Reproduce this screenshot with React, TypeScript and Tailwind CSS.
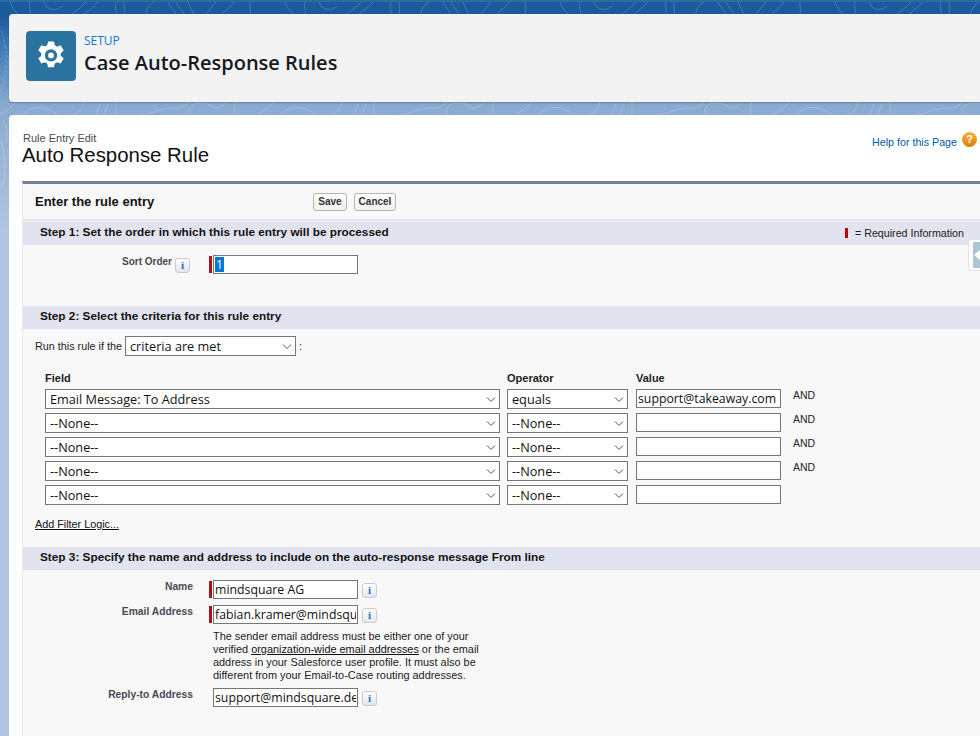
import React from "react";

function Info({ className = "" }: { className?: string }) {
  return (
    <span className={"flex h-[15px] w-[15px] shrink-0 items-center justify-center rounded-[3px] border border-[#c9ccd2] bg-gradient-to-b from-[#ffffff] to-[#e4e6ea] text-[11px] font-bold leading-none text-[#1b6fc2] [font-family:'Liberation_Serif',serif] " + className}>
      i
    </span>
  );
}

function StepBar({ text, children }: { text: string; children?: React.ReactNode }) {
  return (
    <div className="flex h-[23px] items-center justify-between bg-[#e1e4ef] pb-[1px] pl-[17px] text-[11.8px] font-bold text-[#111]">
      <span>{text}</span>
      {children}
    </div>
  );
}

function Sel({ value, className }: { value: string; className: string }) {
  return (
    <div className={"relative h-[20px] " + className}>
      <select
        defaultValue={value}
        className="block h-full w-full appearance-none rounded-none border border-[#767676] bg-white pl-[4px] text-[12.7px] text-[#111] [font-family:'Open_Sans',sans-serif]"
      >
        <option>{value}</option>
      </select>
      <svg className="pointer-events-none absolute right-[4px] top-[7px]" width="10" height="8" viewBox="0 0 10 8" fill="none" stroke="#555" strokeWidth="1">
        <path d="M1 1.500l4 4 4-4" />
      </svg>
    </div>
  );
}

function Txt({ value = "", className = "" }: { value?: string; className?: string }) {
  return (
    <input
      readOnly
      value={value}
      className={"h-[19px] w-[145px] rounded-none border border-[#767676] bg-white px-[1px] text-[12.3px] text-[#111] outline-none [font-family:'Open_Sans',sans-serif] " + className}
    />
  );
}

function FieldRow({ label, required, children, className = "" }: { label: string; required?: boolean; children: React.ReactNode; className?: string }) {
  return (
    <div className={"flex items-start " + className}>
      <div className="w-[170px] text-right text-[10.3px] font-bold leading-[13px] text-[#4a4a56]">{label}</div>
      <div className={"ml-[16px] mt-[1px] h-[17px] w-[3px] " + (required ? "bg-[#b00f1e]" : "")} />
      <div className="ml-[1px]">{children}</div>
    </div>
  );
}

const rows = [
  { f: "Email Message: To Address", o: "equals", v: "support@takeaway.com", and: true },
  { f: "--None--", o: "--None--", v: "", and: true },
  { f: "--None--", o: "--None--", v: "", and: true },
  { f: "--None--", o: "--None--", v: "", and: true },
  { f: "--None--", o: "--None--", v: "", and: false },
];

export default function App() {
  return (
    <div className="relative h-[736px] w-[980px] overflow-hidden bg-[linear-gradient(#1a5b9e_0px,#1a5b9e_16px,#4f86bd_60px,#8aa9d0_105px,#b0c4df_230px,#b0c4df_736px)] pl-[9px] pt-[14px] [font-family:'Liberation_Sans',Arial,sans-serif]">
      <div className="absolute left-0 top-0 h-[2px] w-[980px] bg-[#2a6d9e]" />
      <svg className="absolute left-0 top-0 h-[240px] w-[980px]" width="980" height="240" fill="none" stroke="#ffffff" strokeOpacity="0.18" strokeWidth="1">
        <defs>
          <pattern id="ct" x="0" y="2" width="275" height="12" patternUnits="userSpaceOnUse">
            <path d="M10 0c2 6 6 10 8 12M30 0c-2 5 2 9 0 12M44 0c2 8 12 10 18 4M72 12c6-4 10-8 14-12M84 12c6-4 10-8 14-12M116 0c-2 5 1 9 0 12M124 0c0 5 1 9 0 12M146 12c0-5 4-10 8-12M168 0c3 5 6 9 8 12M176 0c3 5 6 9 8 12M188 0c2 5 4 9 6 12M206 12c4-4 6-8 10-12M222 12c4-4 10-8 12-12M250 0c0 5 1 9 0 12" />
          </pattern>
          <pattern id="cb" x="0" y="102" width="258" height="13" patternUnits="userSpaceOnUse">
            <path d="M0 12c8-4 12-8 16-12M22 13c6-8 22-12 36 0M72 13c8-2 10-6 12-13M100 2l-4 10M108 2l-4 10M116 0v13M140 13c12 0 14-6 34-7 8 0 12-2 14-6M190 13c-4-6 2-12 8-12s10 0 14 4c6 2 10 0 14-4M236 13c-2-4-2-8 0-13" />
          </pattern>
        </defs>
        <rect x="0" y="2" width="980" height="12" fill="url(#ct)" stroke="none" />
        <rect x="0" y="102" width="980" height="13" fill="url(#cb)" stroke="none" />
        <path d="M1 30c6 20 7 40-1 62M6 46c4 14 2 26-2 38" strokeDasharray="3 2" />
        <path d="M0 140c5 10 7 30 2 46M3 120c4 6 5 12 3 22" />
      </svg>

      {/* Header card */}
      <div className="relative flex h-[88px] items-center rounded-l-[4px] bg-[#f3f3f3] pb-[4px] pl-[17px] shadow-[0_1px_2px_rgba(0,0,0,0.25)]">
        <div className="flex h-[50px] w-[50px] items-center justify-center rounded-[4px] bg-[#2a739e]">
          <svg width="32" height="32" viewBox="0 0 28 28" fill="#fff">
            <path fillRule="evenodd" d="M11.400 1.600h5.200l.7 3.400c.7.3 1.300.6 1.900 1.100l3.300-1.100 2.600 4.500-2.600 2.300c.1.700.1 1.500 0 2.200l2.600 2.300-2.600 4.500-3.300-1.100c-.6.5-1.200.8-1.900 1.100l-.7 3.400h-5.200l-.7-3.400c-.7-.3-1.300-.6-1.900-1.100l-3.300 1.100-2.600-4.500 2.600-2.300c-.1-.7-.1-1.500 0-2.200L2.900 9.300 5.500 4.800 8.800 5.900c.6-.5 1.200-.8 1.900-1.100zM14 8.400a5.400 5.400 0 1 0 0 10.800 5.400 5.400 0 0 0 0-10.800zm0 2.900a2.500 2.500 0 1 1 0 5 2.500 2.500 0 0 1 0-5z" transform="translate(0 -0.300)" />
          </svg>
        </div>
        <div className="ml-[8px] -mt-[3px]">
          <div className="text-[12px] leading-[16px] text-[#0b7ad9] [font-family:'Open_Sans',sans-serif]">SETUP</div>
          <div className="mt-[1px] text-[20px] font-semibold leading-[26px] text-[#16191f] [font-family:'Open_Sans',sans-serif]">Case Auto-Response Rules</div>
        </div>
      </div>

      {/* Body card */}
      <div className="relative mt-[13px] h-[640px] rounded-tl-[4px] bg-white pl-[13px]">
        <div className="flex items-start justify-between pt-[17px]">
          <div>
            <div className="pl-[1px] text-[11px] leading-[12px] text-[#4a4a56]">Rule Entry Edit</div>
            <div className="-mt-[1px] text-[20.4px] leading-[24px] text-[#111]">Auto Response Rule</div>
          </div>
          <div className="flex items-center pr-[3px]">
            <span className="mt-[2px] text-[10.7px] text-[#015ba7]">Help for this Page</span>
            <span className="ml-[5px] -mt-[4px] flex h-[15px] w-[15px] items-center justify-center rounded-full bg-gradient-to-b from-[#f6b23c] to-[#d97f0b] text-[11px] font-bold leading-none text-white">?</span>
          </div>
        </div>

        {/* Block */}
        <div className="mt-[14px] h-[560px] border-l border-t-[3px] border-[#eaeaea] border-t-[#747e96] bg-[#f8f8f8]">
          <div className="flex h-[37px] items-center border-b-2 border-[#e3e3e3] pl-[12px]">
            <div className="w-[278px] text-[13px] font-bold text-[#111]">Enter the rule entry</div>
            <button className="h-[18px] w-[34px] rounded-[3px] border border-[#b5b5b5] bg-gradient-to-b from-white to-[#f0f0f0] text-[10px] font-bold text-[#333]">Save</button>
            <button className="ml-[7px] h-[18px] w-[42px] rounded-[3px] border border-[#b5b5b5] bg-gradient-to-b from-white to-[#f0f0f0] text-[10px] font-bold text-[#333]">Cancel</button>
          </div>

          <div className="mt-[1px]">
            <StepBar text="Step 1: Set the order in which this rule entry will be processed">
              <div className="flex items-center pr-[16px] text-[10.7px] font-normal text-[#222]">
                <span className="mr-[7px] h-[10px] w-[3px] bg-[#c00000]" />= Required Information
              </div>
            </StepBar>
          </div>

          <div className="flex h-[61px] items-start pt-[10px]">
            <div className="w-[149px] text-right text-[10px] font-bold leading-[13px] text-[#4a4a56]">Sort Order</div>
            <Info className="ml-[3px] mt-[3px]" />
            <div className="ml-[19px] mt-[1px] h-[17px] w-[3px] bg-[#b00f1e]" />
            <div className="ml-[1px] flex h-[19px] w-[145px] items-center border border-[#767676] bg-white pl-[1px] text-[12.3px] [font-family:'Open_Sans',sans-serif]">
              <span className="bg-[#0078d7] px-[1px] leading-[15px] text-white">1</span>
            </div>
          </div>

          <StepBar text="Step 2: Select the criteria for this rule entry" />

          <div className="flex h-[34px] items-center pl-[12px] text-[10.8px] text-[#222]">
            <span>Run this rule if the</span>
            <Sel value="criteria are met" className="ml-[3px] w-[171px]" />
            <span className="ml-[3px]">:</span>
          </div>

          <div className="mt-[6px] pl-[22px]">
            <div className="flex h-[19px] items-center text-[11px] font-bold text-[#222]">
              <span className="w-[462px]">Field</span>
              <span className="w-[129px]">Operator</span>
              <span>Value</span>
            </div>
            <div className="flex flex-col gap-[4px] pt-[1px]">
              {rows.map((r, i) => (
                <div key={i} className="flex h-[20px] items-start">
                  <Sel value={r.f} className="w-[455px]" />
                  <Sel value={r.o} className="ml-[7px] w-[121px]" />
                  <Txt value={r.v} className="ml-[8px]" />
                  {r.and && <span className="ml-[12px] text-[10.5px] leading-[13px] text-[#222]">AND</span>}
                </div>
              ))}
            </div>
          </div>

          <div className="mt-[12px] h-[30px] pl-[12px] text-[10.8px] leading-[14px] text-[#111] underline">Add Filter Logic...</div>

          <StepBar text="Step 3: Specify the name and address to include on the auto-response message From line" />

          <div className="pt-[10px]">
            <FieldRow label="Name" required>
              <div className="flex items-start">
                <Txt value="mindsquare AG" />
                <Info className="ml-[4px] mt-[3px]" />
              </div>
            </FieldRow>
            <FieldRow label="Email Address" required className="mt-[6px]">
              <div className="flex items-start">
                <Txt value="fabian.kramer@mindsquare.de" />
                <Info className="ml-[4px] mt-[3px]" />
              </div>
              <div className="mt-[6px] w-[272px] text-[10.9px] leading-[13px] text-[#222]">
                The sender email address must be either one of your verified{" "}
                <span className="text-[#111] underline">organization-wide email addresses</span> or the email address in your Salesforce user profile. It must also be different from your Email-to-Case routing addresses.
              </div>
            </FieldRow>
            <FieldRow label="Reply-to Address" className="mt-[6px]">
              <div className="flex items-start">
                <Txt value="support@mindsquare.de" />
                <Info className="ml-[4px] mt-[3px]" />
              </div>
            </FieldRow>
          </div>
        </div>
      </div>

      {/* Side tab */}
      <div className="absolute right-0 top-[239px] flex h-[32px] w-[12px] items-center rounded-l-[4px] border border-r-0 border-[#e3e3e3] bg-white pl-[4px]">
        <div className="relative h-[26px] w-[8px] bg-[#a9c7d4]">
          <div className="absolute left-[1px] top-[8px] h-0 w-0 border-y-[5px] border-r-[6px] border-y-transparent border-r-white" />
        </div>
      </div>
    </div>
  );
}
